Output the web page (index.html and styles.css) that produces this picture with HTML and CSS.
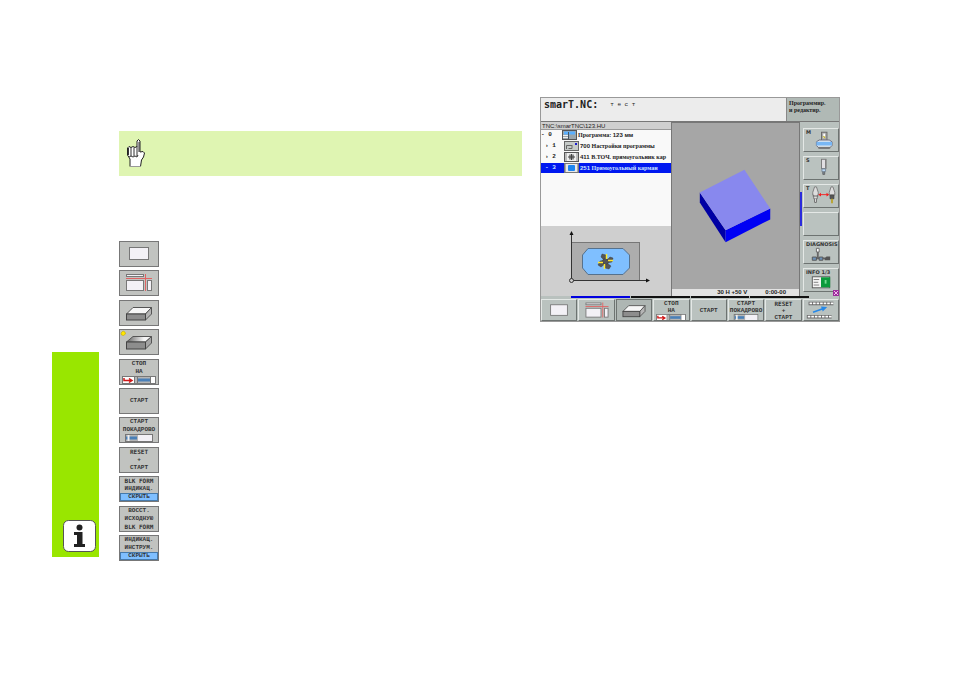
FILE: index.html
```html
<!DOCTYPE html>
<html lang="ru">
<head>
  <meta charset="UTF-8" />
  <meta name="viewport" content="width=device-width, initial-scale=1.0" />
  <title>smarT.NC: тест</title>
  <link rel="stylesheet" href="styles.css">
</head>
<body>
  <!-- Shared softkey drawings -->
  <svg class="defs" width="0" height="0" aria-hidden="true">
    <symbol id="top" viewBox="0 0 40 26">
      <rect x="10.5" y="6.5" width="19" height="12" fill="#f3f1f6" stroke="#777"/>
    </symbol>
    <symbol id="planes" viewBox="0 0 40 26">
      <g fill="#f3f1f6" stroke="#777">
        <rect x="7.500" y="4.500" width="17" height="2"/>
        <rect x="7.500" y="10.500" width="17" height="10"/>
        <rect x="28.500" y="10.500" width="4" height="10"/>
      </g>
      <path d="M7 8.500H33M26.500 4V21" stroke="#e06464" fill="none"/>
    </symbol>
    <symbol id="block" viewBox="0 0 40 26">
      <path d="M7.500 14 14 7.500H32.500L26.500 14Z" fill="#f6f6f6" stroke="#555"/>
      <path d="M26.500 14 32.500 7.500V14L26.500 20Z" fill="#b5b5b5" stroke="#555"/>
      <rect x="7.500" y="14" width="19" height="6" fill="#8d8d8d" stroke="#444"/>
    </symbol>
    <symbol id="blockfull" viewBox="0 0 40 26">
      <linearGradient id="shine"><stop offset=".1" stop-color="#777"/><stop offset=".7" stop-color="#f6f6f6"/></linearGradient>
      <path d="M7.500 13 14 7.500H32.500L26.500 13Z" fill="url(#shine)" stroke="#555"/>
      <path d="M26.500 13 32.500 7.500V14L26.500 20Z" fill="#a5a5a5" stroke="#555"/>
      <rect x="7.500" y="13" width="19" height="7" fill="#8d8d8d" stroke="#444"/>
      <path d="M2 4 4 2 6 3 6.500 5 4.500 6.500 2.500 6Z" fill="#ffe800" stroke="#c8a800" stroke-width=".6"/>
    </symbol>
    <symbol id="stopat" viewBox="0 0 34 8">
      <rect x=".5" y=".5" width="33" height="7" fill="#b5b5b5" stroke="#777"/>
      <rect x="1" y="1" width="12" height="6" fill="#fff"/>
      <path d="M2 2V4.500H10M7 2.500 10 4.500 7 6.500" fill="none" stroke="#d01818" stroke-width="1.500"/>
      <path d="M12.500 1V7M15.500 1V7M28.500 1V7" stroke="#777"/>
      <path d="M16 4H28" stroke="#4a80b8" stroke-width="3"/>
      <rect x="29" y="1" width="4" height="6" fill="#fff"/>
    </symbol>
    <symbol id="single" viewBox="0 0 28 8">
      <rect x=".5" y=".5" width="27" height="7" fill="#b5b5b5" stroke="#777"/>
      <path d="M1 4H12" stroke="#4a80b8" stroke-width="3"/>
      <path d="M3.500 1V7" stroke="#eee" stroke-width="2"/>
      <rect x="13" y="1" width="14" height="6" fill="#f3f1f6"/>
    </symbol>
  </svg>

  <main class="page">
    <aside class="tab">
      <svg width="34" height="33" viewBox="0 0 34 33" role="img" aria-label="Информация">
        <rect x=".5" y=".5" width="32" height="31" rx="5" fill="#fff" stroke="#555"/>
        <circle cx="16.500" cy="7.500" r="3" fill="#222"/>
        <path d="M11 12H19.500V24H22V27H11V24H14V15H11Z" fill="#222"/>
      </svg>
    </aside>

    <section class="text">
      <div class="note">
        <svg width="20" height="30" viewBox="0 0 20 30" role="img" aria-label="Указание">
          <path d="M4 20 1.500 16V9L3 7.500 5 8.500 7 7.500 9 8.500 11 7.500V2L12.500.5 14 2V13L17 12.500 18.500 14 17.500 18 15.500 21 14.500 27.500H4Z" fill="#fff" stroke="#222"/>
          <path d="M2.500 9V16M5 8.500V17M8 8.500V17M11 7V17M3 18 5 17 7 18 9 17 11 18 12 16M13 3V13" stroke="#333" fill="none"/>
          <path d="M4 27.500H15" stroke="#999"/>
        </svg>
      </div>

      <div class="keys">
        <button class="key" aria-label="Вид сверху"><svg class="pic"><use href="#top"/></svg></button>
        <button class="key" aria-label="3 плоскости"><svg class="pic"><use href="#planes"/></svg></button>
        <button class="key" aria-label="Трехмерное изображение"><svg class="pic"><use href="#block"/></svg></button>
        <button class="key" aria-label="Трехмерное изображение высокого разрешения"><svg class="pic"><use href="#blockfull"/></svg></button>
        <button class="key"><span>СТОП</span><span>НА</span><svg class="stopat"><use href="#stopat"/></svg></button>
        <button class="key"><span>СТАРТ</span></button>
        <button class="key"><span>СТАРТ</span><span>ПОКАДРОВО</span><svg class="single"><use href="#single"/></svg></button>
        <button class="key"><span class="latin">RESET</span><span>+</span><span>СТАРТ</span></button>
        <button class="key"><span class="latin">BLK FORM</span><span>ИНДИКАЦ.</span><span class="state">СКРЫТЬ</span></button>
        <button class="key"><span>ВОССТ.</span><span>ИСХОДНУЮ</span><span class="latin">BLK FORM</span></button>
        <button class="key"><span>ИНДИКАЦ.</span><span>ИНСТРУМ.</span><span class="state">СКРЫТЬ</span></button>
      </div>
    </section>

    <section class="screen">
      <header class="head">
        <div class="title"><h1>smarT.NC:</h1><span>т е с т</span></div>
        <div class="mode">Программир.<br>и редактир.</div>
      </header>

      <div class="work">
        <div class="left">
          <div class="path">TNC:\smarTNC\123.HU</div>
          <ul class="tree">
            <li>
              <span class="num">- 0</span>
              <svg width="15" height="10" viewBox="0 0 15 10"><rect x=".5" y=".5" width="14" height="9" fill="#9aa6ac" stroke="#555"/><path d="M2 3H13" stroke="#5ab0ff" stroke-width="3"/><path d="M1 5.500H6M1 7.500H6" stroke="#eee"/><path d="M6.500 2V9" stroke="#456"/></svg>
              <span class="name">Программа: <b>123 мм</b></span>
            </li>
            <li class="sub">
              <span class="num">› 1</span>
              <svg width="15" height="10" viewBox="0 0 15 10"><rect x=".5" y=".5" width="14" height="9" fill="#c5cac8" stroke="#666"/><path d="M2.500 8V4.500H8M4.500 7.500H8V4" stroke="#666" fill="none"/><path d="M11 2H13V4H11Z" fill="#1b1bd0"/></svg>
              <span class="name"><b>700</b> Настройки программы</span>
            </li>
            <li class="sub">
              <span class="num">› 2</span>
              <svg width="15" height="10" viewBox="0 0 15 10"><rect x=".5" y=".5" width="14" height="9" fill="#bbb" stroke="#555"/><rect x="3" y="1" width="9" height="8" fill="#eee"/><rect x="5" y="2.500" width="5" height="5" fill="#888"/><path d="M4 5H11M7.500 2V8" stroke="#444"/></svg>
              <span class="name"><b>411</b> В.ТОЧ. прямоугольник кар</span>
            </li>
            <li class="sub selected">
              <span class="num">- 3</span>
              <svg width="15" height="10" viewBox="0 0 15 10"><rect x=".5" y=".5" width="14" height="9" fill="#aaa" stroke="#777"/><rect x="2" y="1" width="11" height="8" fill="#e8e8e8"/><rect x="4" y="2" width="7" height="6" rx="1" fill="#1e86f0"/></svg>
              <span class="name"><b>251</b> Прямоугольный карман</span>
            </li>
          </ul>
          <svg class="sketch" viewBox="0 0 130 70" role="img" aria-label="Прямоугольный карман">
            <rect x="30.500" y="16.500" width="68" height="38" fill="#adadad" stroke="#777"/>
            <path d="M47 22.500H82L88.500 29V42L82 48.500H47L41.500 42V29Z" fill="#7fbfff" stroke="#56718c"/>
            <path d="M30.500 8V54.500H106" fill="none" stroke="#333"/>
            <path d="M28.500 9 30.500 5 32.500 9ZM105 52.500 109 54.500 105 56.500Z" fill="#111"/>
            <circle cx="30.500" cy="54.500" r="2" fill="#ccc" stroke="#333"/>
            <g fill="#555" stroke="#333" stroke-width=".4">
              <path d="M63 34 60 31 61 28 65 29 65 34Z"/>
              <path d="M66 34 69 31 72 32 71 36 66 37Z"/>
              <path d="M66 37 70 40 68 43 64 42 64 37Z"/>
              <path d="M64 38 60 41 57 39 59 35 64 34Z"/>
              <circle cx="64.500" cy="35.500" r="3"/>
            </g>
            <path d="M65.500 28V33M72 34.500H67M63.500 43V38M57 36.500H62" stroke="#ffe92e" stroke-width="1.500"/>
          </svg>
        </div>

        <div class="view">
          <svg class="part" viewBox="0 0 128 167" role="img" aria-label="Заготовка">
            <path d="M28 70 54 108V120L28 80Z" fill="#0000a4"/>
            <path d="M54 108 99 86V97L54 120Z" fill="#0000f4"/>
            <path d="M28 70 73 47 99 86 54 108Z" fill="#8888ee"/>
          </svg>
          <div class="status"><span>30 Н +50 V</span><span>0:00-00</span></div>
        </div>

        <nav class="side">
          <button class="machine" aria-label="M"><span>M</span>
            <svg viewBox="0 0 36 24"><rect x="18.500" y="3.500" width="6" height="10" fill="#aaa" stroke="#666"/><path d="M21.500 5V10" stroke="#fff" stroke-width="2"/><path d="M20 8.500H22V10" stroke="#bba800" fill="none"/><path d="M16 12H27L30 14V18L27 21H16L13 18V14Z" fill="#dfe8f0" stroke="#667"/><path d="M13 16H30" stroke="#78b7f5" stroke-width="4"/><path d="M15 20.500H28" stroke="#777" stroke-width="2"/></svg>
          </button>
          <button class="machine" aria-label="S"><span>S</span>
            <svg viewBox="0 0 36 24"><rect x="18.500" y="2.500" width="5" height="10" fill="#e1dfe3" stroke="#777"/><path d="M23 3V12" stroke="#777"/><path d="M19 13H23V16H19Z" fill="#b9d7f4" stroke="#789"/><path d="M20 16V19H22V16" fill="#789" stroke="#666"/></svg>
          </button>
          <button class="machine" aria-label="T"><span>T</span>
            <svg viewBox="0 0 36 24"><path d="M11 2H13L15 8V11H14V15H10V11H9V8Z" fill="#ddd" stroke="#777"/><path d="M9 12H15M11 15V19H13V15" stroke="#666" fill="#eee"/><path d="M29 2H31L33 8V11H27V8Z" fill="#ddd" stroke="#777"/><path d="M28 11H32V15H28Z" fill="#555" stroke="#444"/><path d="M30 15V20" stroke="#b9a32a" stroke-width="2"/><path d="M17 10.500H25" stroke="#f32020"/><path d="M18 8.500 15 10.500 18 12.500ZM24 8.500 27 10.500 24 12.500Z" fill="#f32020"/></svg>
          </button>
          <button class="machine" aria-label="Свободно"></button>
          <button class="machine" aria-label="DIAGNOSIS"><span>DIAGNOSIS</span>
            <svg viewBox="0 0 36 24"><path d="M13 8H16V12H13Z" fill="#fff" stroke="#666"/><path d="M14.500 12V18M9 19H27" stroke="#666" stroke-width="2"/><path d="M8.500 17.500H13V21H8.500ZM16 17.500H20V21H16Z" fill="#6d91b6" stroke="#555"/><path d="M24 17H28V21H22V19Z" fill="#555"/></svg>
          </button>
          <button class="machine" aria-label="INFO 1/3"><span>INFO 1/3</span>
            <svg viewBox="0 0 36 24"><rect x="8.500" y="8.500" width="19" height="12" fill="#f5f5f5" stroke="#555"/><path d="M10 11.500H16M10 14.500H15M10 17.500H16" stroke="#777"/><rect x="18" y="9" width="10" height="11" fill="#0b9a3c"/><rect x="22" y="12" width="2" height="4" fill="#74dc92"/></svg>
          </button>
          <svg class="mark" width="6" height="6" viewBox="0 0 6 6"><rect width="6" height="6" fill="#9c2d9c"/><path d="M1 1 5 5M5 1 1 5" stroke="#f4b8ee"/></svg>
        </nav>
      </div>

      <div class="pages"><i class="now"></i><i></i><i></i><i></i></div>
      <div class="softkeys">
        <button class="key" aria-label="Вид сверху"><svg class="pic"><use href="#top"/></svg></button>
        <button class="key" aria-label="3 плоскости"><svg class="pic"><use href="#planes"/></svg></button>
        <button class="key pressed" aria-label="Трехмерное изображение"><svg class="pic"><use href="#block"/></svg></button>
        <button class="key"><span>СТОП</span><span>НА</span><svg class="stopat"><use href="#stopat"/></svg></button>
        <button class="key"><span>СТАРТ</span></button>
        <button class="key"><span>СТАРТ</span><span>ПОКАДРОВО</span><svg class="single"><use href="#single"/></svg></button>
        <button class="key"><span class="latin">RESET</span><span>+</span><span>СТАРТ</span></button>
        <button class="key" aria-label="Инструменты">
          <svg class="pic" viewBox="0 0 40 26"><path d="M6 5H34M4 20H32" stroke="#666" stroke-width="4"/><path d="M7 5H34M5 20H32" stroke="#fff" stroke-width="2" stroke-dasharray="3 1"/><path d="M11 15 22 11" stroke="#2688e8" stroke-width="2"/><path d="M20 8.500 27 9 22 14Z" fill="#2688e8"/></svg>
        </button>
      </div>
    </section>
  </main>
</body>
</html>
```

FILE: styles.css
```css
* {
  box-sizing: border-box;
}

body {
  margin: 0;
  background: #fff;
  color: #222;
  font-family: "Liberation Sans", sans-serif;
}

.defs {
  position: absolute;
}

.page {
  display: grid;
  grid-template-columns: 47px minmax(0, 1fr) 300px;
  align-items: start;
  padding: 0 114px 0 52px;
}

/* Green chapter tab */
.tab {
  display: flex;
  align-items: flex-end;
  justify-content: flex-end;
  min-height: 205px;
  margin-top: 352px;
  padding: 0 2px 4px 0;
  background: #99e600;
}

.text {
  margin: 131px 18px 0 20px;
}

.note {
  display: flex;
  align-items: center;
  min-height: 45px;
  padding-left: 7px;
  background: #dff5b2;
}

.keys {
  display: flex;
  flex-direction: column;
  justify-content: space-between;
  width: 40px;
  min-height: 320px;
  margin-top: 65px;
}

button {
  margin: 0;
  padding: 0;
  border-radius: 0;
  color: #333;
}

.key {
  display: flex;
  flex-direction: column;
  align-items: center;
  justify-content: center;
  height: 26px;
  border: 1px solid #777;
  background: #c1c3c0;
  font: bold 6px/8px "Liberation Mono", monospace;
  overflow: hidden;
}

.key .latin {
  font-family: "DejaVu Sans Mono", monospace;
}

.key .pic {
  flex: none;
  width: 40px;
  height: 26px;
}

.key .stopat {
  flex: none;
  width: 34px;
  height: 8px;
}

.key .single {
  flex: none;
  width: 28px;
  height: 8px;
}

.key .state {
  width: 38px;
  border: 1px solid #467aab;
  background: #7fbfff;
  line-height: 6px;
}

/* Control screen */
.screen {
  margin-top: 97px;
  border: 1px solid #999;
  background: #b9c1be;
}

.head {
  display: flex;
  height: 24px;
  border-bottom: 1px solid #777;
}

.title {
  display: flex;
  flex: 1;
  gap: 12px;
  padding-left: 3px;
  background: #ececec;
  line-height: 13px;
}

.title h1 {
  margin: 0;
  font: bold 10px/13px "DejaVu Sans Mono", monospace;
}

.title span {
  font: 6px/14px "Liberation Mono", monospace;
}

.mode {
  width: 53px;
  padding: 2px 0 0 2px;
  border-left: 1px solid #888;
  background: #b0b9b5;
  font: bold 6px/7px "Liberation Serif", serif;
}

.work {
  display: grid;
  grid-template-columns: 130px minmax(0, 1fr) 39px;
  height: 174px;
}

.left {
  display: flex;
  flex-direction: column;
  min-width: 0;
  background: #cfcfcf;
}

.path {
  height: 8px;
  padding-left: 1px;
  border-bottom: 1px solid #999;
  font: 6px/8px "Liberation Sans", sans-serif;
}

.tree {
  flex: 1;
  margin: 0;
  padding: 0;
  background: #f9f9f9;
  list-style: none;
}

.tree li {
  display: flex;
  align-items: center;
  height: 10px;
  margin-bottom: 1px;
  font: 6px/10px "Liberation Serif", serif;
  white-space: nowrap;
  overflow: hidden;
}

.tree svg {
  flex: none;
}

.num {
  flex: none;
  width: 21px;
  font: bold 6px/10px "Liberation Mono", monospace;
  white-space: pre;
}

.sub .num {
  width: 23px;
  padding-left: 4px;
}

.name {
  padding-left: 1px;
  font-weight: bold;
}

.name b {
  font-family: "Liberation Sans", sans-serif;
}

.tree .selected {
  background: #0018f0;
  color: #cfe4ff;
}

.sketch {
  flex: none;
  width: 130px;
  height: 70px;
}

.view {
  display: flex;
  flex-direction: column;
  border: 1px solid #777;
  border-bottom: 0;
  background: #a6a6a6;
}

.part {
  flex: 1;
  width: 100%;
  min-height: 0;
}

.status {
  display: flex;
  justify-content: flex-end;
  gap: 18px;
  padding-right: 13px;
  background: #e2e2e2;
  font: bold 6px/7px "Liberation Sans", sans-serif;
}

.side {
  position: relative;
  display: flex;
  flex-direction: column;
  gap: 4px;
  padding: 6px 0 0 3px;
  background: linear-gradient(#2b2bdc, #2b2bdc) 0 70px / 2px 34px no-repeat;
}

.machine {
  position: relative;
  height: 24px;
  border: 1px solid;
  border-color: #e4e8e6 #6d7371 #6d7371 #e4e8e6;
  background: #bac2bf;
  font: bold 5px/7px "DejaVu Sans", sans-serif;
  text-align: left;
}

.machine span {
  display: block;
  height: 22px;
  padding-left: 2px;
}

.machine svg {
  position: absolute;
  inset: 0;
  width: 100%;
  height: 100%;
}

.mark {
  position: absolute;
  right: 0;
  bottom: 0;
}

.pages {
  display: grid;
  grid-template-columns: repeat(4, 1fr);
  gap: 1px;
  padding: 0 30px;
}

.pages i {
  height: 2px;
  background: #111;
}

.pages .now {
  background: #0000e0;
}

.softkeys {
  display: grid;
  grid-template-columns: repeat(8, minmax(0, 1fr));
  gap: 1px;
  padding-top: 1px;
}

.softkeys .key {
  height: 22px;
  border-color: #e4e8e6 #6d7371 #6d7371 #e4e8e6;
  background: #bac2bf;
  line-height: 7px;
}

.softkeys .pressed {
  border-color: #6d7371;
  background: #aeb6b3;
}

.softkeys .pic {
  width: 36px;
  height: 23px;
}

.softkeys .stopat {
  width: 32px;
  height: 7px;
}

.softkeys .single {
  width: 30px;
  height: 7px;
}
```
